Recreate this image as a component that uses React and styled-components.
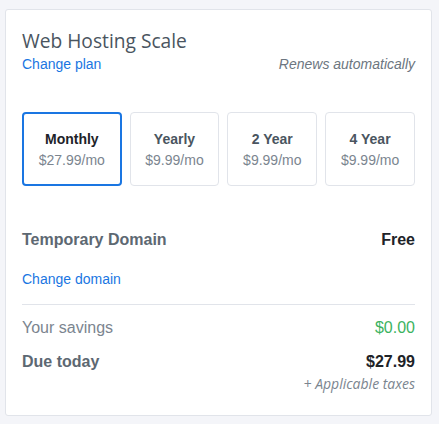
import React from 'react';
import styled, { createGlobalStyle } from 'styled-components';

const GlobalStyle = createGlobalStyle`
    html, body {
        margin: 0;
        background: #f4f5f9;
        font-family: "Liberation Sans", Arial, sans-serif;
    }
`
const Page = styled.div`
    padding: 9px 8px 8px 5px;
`
const Card = styled.div`
    width: 427px;
    box-sizing: border-box;
    background: #fff;
    border: 1px solid #e1e4ea;
    border-radius: 3px;
    padding: 19px 16px 23px 16px;
`
const Title = styled.h2`
    margin: 0;
    font-family: "Open Sans", sans-serif;
    font-weight: 400;
    font-size: 19.2px;
    line-height: 24px;
    color: #4a5560;
`
const SubRow = styled.div`
    display: flex;
    justify-content: space-between;
    align-items: center;
    margin-top: 2px;
    height: 18px;
`
const LinkText = styled.a`
    font-size: 14px;
    line-height: 18px;
    color: #1a76e2;
    text-decoration: none;
    cursor: pointer;
`
const Note = styled.span`
    font-size: 14px;
    font-style: italic;
    color: #6c7680;
`
const Options = styled.div`
    display: flex;
    gap: 8px;
    margin-top: 39px;
`
const Option = styled.div`
    flex: 1 1 auto;
    height: 74px;
    box-sizing: border-box;
    display: flex;
    flex-direction: column;
    align-items: center;
    justify-content: center;
    gap: 1px;
    border-radius: 4px;
    border: ${p => p.$active ? '2px solid #1a76e2' : '1px solid #e1e4ea'};
`
const OptionName = styled.div`
    font-size: 14px;
    line-height: 20px;
    font-weight: 700;
    color: ${p => p.$active ? '#1e2328' : '#4a5560'};
`
const OptionPrice = styled.div`
    font-size: 14px;
    line-height: 20px;
    color: #7b858f;
`
const Row = styled.div`
    display: flex;
    justify-content: space-between;
    align-items: center;
    height: 20px;
    margin-top: ${p => p.$mt || 0}px;
    font-size: 16px;
`
const Label = styled.span`
    font-weight: ${p => p.$bold ? 700 : 400};
    color: ${p => p.$bold ? '#5d6872' : '#7b858f'};
`
const Value = styled.span`
    font-weight: ${p => p.$green ? 400 : 700};
    color: ${p => p.$green ? '#3cb35f' : '#1e2328'};
`
const DomainLink = styled(LinkText)`
    display: block;
    margin-top: 20px;
`
const Divider = styled.hr`
    border: 0;
    border-top: 1px solid #e1e4ea;
    margin: 16px 0 0;
`
const Taxes = styled.div`
    margin-top: 4px;
    text-align: right;
    font-size: 14px;
    line-height: 16px;
    font-style: italic;
    color: #7b858f;
    font-family: "Open Sans", sans-serif;
`

const plans = [
    { name: 'Monthly', price: '$27.99/mo', active: true },
    { name: 'Yearly', price: '$9.99/mo' },
    { name: '2 Year', price: '$9.99/mo' },
    { name: '4 Year', price: '$9.99/mo' },
]

const App = () => {
    return (
        <Page>
            <GlobalStyle />
            <Card>
                <Title>Web Hosting Scale</Title>
                <SubRow>
                    <LinkText>Change plan</LinkText>
                    <Note>Renews automatically</Note>
                </SubRow>
                <Options>
                    {plans.map(p => (
                        <Option key={p.name} $active={p.active}>
                            <OptionName $active={p.active}>{p.name}</OptionName>
                            <OptionPrice>{p.price}</OptionPrice>
                        </Option>
                    ))}
                </Options>
                <Row $mt={44}>
                    <Label $bold>Temporary Domain</Label>
                    <Value>Free</Value>
                </Row>
                <DomainLink>Change domain</DomainLink>
                <Divider />
                <Row $mt={13}>
                    <Label>Your savings</Label>
                    <Value $green>$0.00</Value>
                </Row>
                <Row $mt={14}>
                    <Label $bold>Due today</Label>
                    <Value>$27.99</Value>
                </Row>
                <Taxes>+ Applicable taxes</Taxes>
            </Card>
        </Page>
    );
};

export default App;
